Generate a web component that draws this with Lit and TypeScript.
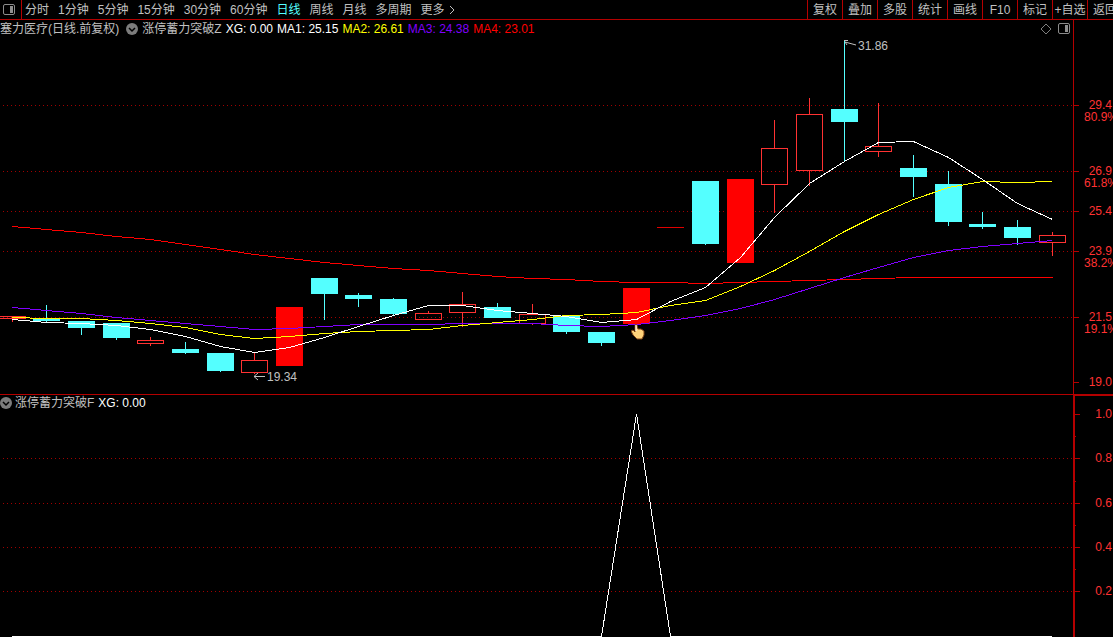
import { LitElement, html, svg, css } from "lit";
import { customElement } from "lit/decorators.js";
import { classMap } from "lit/directives/class-map.js";

type Kind = "down" | "up" | "limit" | "flat";
// kind, body top, body bottom, high, low
type Candle = [Kind, number, number, number, number];

const CENTERS = [
  12, 46, 81, 116, 150, 185, 220, 254, 289, 324, 358, 393, 428, 462, 497, 532,
  566, 601, 636, 670, 705, 740, 774, 809, 844, 878, 913, 948, 982, 1017, 1052,
];

const CANDLES: Candle[] = [
  ["up", 316, 319, 316, 322],
  ["down", 319, 321, 305, 322],
  ["down", 321, 328, 321, 335],
  ["down", 323, 338, 323, 340],
  ["up", 340, 344, 337, 346],
  ["down", 349, 353, 342, 354],
  ["down", 353, 371, 353, 372],
  ["up", 360, 373, 353, 374],
  ["limit", 307, 366, 307, 366],
  ["down", 278, 294, 278, 320],
  ["down", 295, 299, 293, 307],
  ["down", 299, 314, 298, 315],
  ["up", 313, 320, 311, 320],
  ["up", 304, 313, 292, 327],
  ["down", 307, 318, 303, 318],
  ["up", 314, 324, 304, 325],
  ["down", 316, 332, 316, 334],
  ["down", 332, 343, 332, 346],
  ["limit", 288, 324, 288, 324],
  ["flat", 227, 228, 227, 228],
  ["down", 181, 244, 181, 245],
  ["limit", 179, 263, 179, 263],
  ["up", 148, 185, 120, 213],
  ["up", 114, 171, 98, 186],
  ["down", 109, 122, 40, 162],
  ["up", 146, 152, 103, 157],
  ["down", 168, 177, 155, 197],
  ["down", 184, 222, 171, 226],
  ["down", 224, 227, 212, 229],
  ["down", 227, 238, 220, 245],
  ["up", 235, 243, 232, 256],
];

const AVERAGES: { name: string; values: number[] }[] = [
  {
    name: "ma4",
    values: [
      226, 229, 232, 236, 239, 244, 249, 254, 258, 262, 265, 268, 270, 273, 276,
      278, 279, 281, 282, 282, 283, 282, 281, 280, 279, 278, 277, 277, 277, 277, 277,
    ],
  },
  {
    name: "ma3",
    values: [
      307, 310, 313, 317, 320, 323, 326, 329, 328, 326, 324, 324, 324, 323, 323,
      323, 325, 326, 324, 320, 315, 308, 299, 288, 277, 267, 257, 250, 246, 243, 240,
    ],
  },
  {
    name: "ma2",
    values: [
      317, 318, 318, 320, 323, 327, 334, 338, 336, 333, 331, 330, 329, 325, 322,
      319, 315, 314, 312, 305, 300, 286, 270, 251, 231, 214, 199, 187, 181, 182, 181,
    ],
  },
  {
    name: "ma1",
    values: [
      319, 322, 323, 325, 329, 336, 346, 352, 347, 337, 326, 315, 305, 305, 310,
      313, 316, 322, 319, 301, 287, 257, 217, 183, 161, 142, 141, 157, 179, 203, 219,
    ],
  },
];

const PERIODS = [
  "分时", "1分钟", "5分钟", "15分钟", "30分钟", "60分钟",
  "日线", "周线", "月线", "多周期",
];
const TOOLS = ["复权", "叠加", "多股", "统计", "画线", "F10", "标记", "+自选", "返回"];

const PRICE_TOP = 38;
const PRICE_HEIGHT = 356;
const SIGNAL_TOP = 411;
const SIGNAL_HEIGHT = 226;
const WIDTH = 1073;

const PRICE_GRID = [105, 171, 211, 251, 317];
const SIGNAL_GRID = [458, 503, 547, 591];

const PRICE_TICKS = [
  { y: 105, label: "29.4", ratio: "80.9%" },
  { y: 171, label: "26.9", ratio: "61.8%" },
  { y: 211, label: "25.4", ratio: "" },
  { y: 251, label: "23.9", ratio: "38.2%" },
  { y: 317, label: "21.5", ratio: "19.1%" },
  { y: 382, label: "19.0", ratio: "" },
];
const SIGNAL_TICKS = [
  { y: 414, label: "1.0" },
  { y: 436, label: "" },
  { y: 458, label: "0.8" },
  { y: 481, label: "" },
  { y: 503, label: "0.6" },
  { y: 525, label: "" },
  { y: 547, label: "0.4" },
  { y: 569, label: "" },
  { y: 591, label: "0.2" },
];

const share = (value: number, total: number) => `${(value / total) * 100}%`;

const panelIcon = html`<svg class="icon" width="13" height="12" viewBox="0 0 13 12" aria-hidden="true">
  <rect x="0.5" y="0.5" width="11" height="10" rx="1.5" fill="none" stroke="#8c8c8c" />
  <rect x="7" y="2" width="3" height="7" fill="#909090" />
</svg>`;

const chevronIcon = html`<svg class="icon" width="12" height="12" viewBox="0 0 12 12" aria-hidden="true">
  <circle cx="6" cy="6" r="6" fill="#7c7c7c" />
  <path d="M3 5 L6 8 L9 5" fill="none" stroke="#000" stroke-width="1.5" />
</svg>`;

@customElement("app-root")
export class AppRoot extends LitElement {
  static styles = css`
    :host {
      display: grid;
      grid-template-rows: 20px minmax(0, 375fr) minmax(0, 242fr);
      height: 100vh;
      overflow: hidden;
      background: #000;
      color: #c0c0c0;
      font: 12px/16px "Liberation Sans", "Noto Sans CJK SC", sans-serif;
    }
    * {
      box-sizing: border-box;
    }
    button {
      margin: 0;
      padding: 0;
      border: 0;
      background: none;
      color: inherit;
      font: inherit;
      white-space: nowrap;
      cursor: pointer;
    }
    .icon {
      display: block;
      flex: none;
    }
    .toolbar {
      display: flex;
      min-width: 0;
      overflow: hidden;
      border-bottom: 1px solid #b40000;
    }
    .toggle {
      flex: none;
      width: 22px;
      padding-left: 3px;
      border-right: 1px solid #b40000;
    }
    .periods {
      display: flex;
      flex: 1;
      min-width: 0;
      gap: 9px;
      padding-left: 3px;
      overflow: hidden;
    }
    .periods .active {
      color: #54ffff;
    }
    .more {
      display: flex;
      align-items: center;
      gap: 4px;
    }
    .tools {
      display: flex;
      flex: 0 0 306px;
      overflow: hidden;
    }
    .tool {
      flex: none;
      width: 35px;
      border-left: 1px solid #b40000;
    }
    .panel {
      display: grid;
      grid-template-columns: minmax(0, 1fr) 40px;
      min-height: 0;
    }
    .price {
      border-bottom: 1px solid #b40000;
    }
    .main {
      display: flex;
      flex-direction: column;
      min-width: 0;
      min-height: 0;
    }
    .legend {
      display: flex;
      flex: none;
      align-items: center;
      gap: 4px;
      height: 18px;
      white-space: nowrap;
    }
    .signal .legend {
      height: 16px;
    }
    .fold {
      display: flex;
      align-items: center;
      gap: 3px;
    }
    .price .fold {
      gap: 4px;
      margin-left: 3px;
    }
    .actions {
      display: flex;
      align-items: center;
      gap: 6px;
      margin-left: auto;
      padding-right: 2px;
    }
    .value {
      color: #fff;
    }
    .ma2 {
      color: #ff0;
    }
    .ma3 {
      color: #8000ff;
    }
    .ma4 {
      color: #f00;
    }
    .canvas {
      position: relative;
      flex: 1;
      min-height: 0;
    }
    .plot {
      display: block;
      width: 100%;
      height: 100%;
      shape-rendering: crispEdges;
    }
    .grid {
      stroke: #a00000;
      stroke-dasharray: 1 3;
    }
    .line {
      fill: none;
      stroke: #fff;
    }
    .line.ma2 {
      stroke: #ff0;
    }
    .line.ma3 {
      stroke: #8000ff;
    }
    .line.ma4 {
      stroke: #f00;
    }
    .down {
      fill: #54ffff;
    }
    .limit {
      fill: #f00;
    }
    .flat {
      fill: #e00000;
    }
    .wick {
      fill: #ff3232;
    }
    .hollow {
      fill: none;
      stroke: #ff3232;
    }
    .note {
      position: absolute;
      display: flex;
      align-items: center;
      gap: 2px;
      transform: translateY(-50%);
    }
    .pointer {
      position: absolute;
    }
    .axis {
      position: relative;
      overflow: hidden;
      border-left: 1px solid #b40000;
      color: #ff3232;
    }
    .signal .axis {
      border-top: 1px solid #b40000;
      border-left-width: 2px;
    }
    .tick {
      position: absolute;
      left: 0;
      width: 5px;
      height: 1px;
      background: #b40000;
    }
    .minor {
      width: 1px;
    }
    .label {
      position: absolute;
      right: 1px;
      transform: translateY(-50%);
    }
    .ratio {
      position: absolute;
      left: 10px;
      padding-top: 4px;
    }
  `;

  private drawCandle([kind, top, bottom, high, low]: Candle, index: number) {
    const x = CENTERS[index];
    if (kind === "up") {
      return svg`
        <rect class="wick" x=${x} y=${high} width="1" height=${top - high}></rect>
        <rect class="wick" x=${x} y=${bottom} width="1" height=${low - bottom}></rect>
        <rect class="hollow" x=${x - 12.5} y=${top + 0.5} width="26" height=${bottom - top - 1}></rect>`;
    }
    return svg`
      <rect class=${kind} x=${x - 13} y=${top} width="27" height=${bottom - top}></rect>
      <rect class=${kind} x=${x} y=${high} width="1" height=${low - high}></rect>`;
  }

  private drawGrid(rows: number[]) {
    return rows.map(
      (y) => svg`<line class="grid" x1="3" x2=${WIDTH} y1=${y + 0.5} y2=${y + 0.5}></line>`,
    );
  }

  private renderToolbar() {
    return html`<header class="toolbar">
      <button class="toggle" aria-label="侧栏">${panelIcon}</button>
      <nav class="periods">
        ${PERIODS.map(
          (name) => html`<button class=${classMap({ active: name === "日线" })}>${name}</button>`,
        )}
        <button class="more">
          更多
          <svg class="icon" width="7" height="10" viewBox="0 0 7 10" aria-hidden="true">
            <path d="M1 1 L5 5 L1 9" fill="none" stroke="#c0c0c0" />
          </svg>
        </button>
      </nav>
      <nav class="tools">${TOOLS.map((name) => html`<button class="tool">${name}</button>`)}</nav>
    </header>`;
  }

  private renderPrice() {
    const at = (x: number, y: number) =>
      `left:${share(x, WIDTH)};top:${share(y - PRICE_TOP, PRICE_HEIGHT)}`;
    const axisTotal = PRICE_HEIGHT + 18;
    return html`<section class="panel price">
      <div class="main">
        <div class="legend">
          <span>塞力医疗(日线.前复权)</span>
          <button class="fold">${chevronIcon}涨停蓄力突破Z</button>
          <span class="value">XG: 0.00</span>
          <span class="value">MA1: 25.15</span>
          <span class="ma2">MA2: 26.61</span>
          <span class="ma3">MA3: 24.38</span>
          <span class="ma4">MA4: 23.01</span>
          <div class="actions">
            <button aria-label="标注">
              <svg class="icon" width="12" height="12" viewBox="0 0 12 12" aria-hidden="true">
                <path d="M6 1 L11 6 L6 11 L1 6 Z" fill="none" stroke="#808080" />
              </svg>
            </button>
            <button aria-label="面板">${panelIcon}</button>
          </div>
        </div>
        <div class="canvas">
          <svg class="plot" viewBox="0 ${PRICE_TOP} ${WIDTH} ${PRICE_HEIGHT}" preserveAspectRatio="none">
            ${this.drawGrid(PRICE_GRID)}
            ${CANDLES.map((candle, index) => this.drawCandle(candle, index))}
            ${AVERAGES.map(
              ({ name, values }) => svg`<polyline class="line ${name}"
                points=${values.map((y, i) => `${CENTERS[i] + 0.5},${y + 0.5}`).join(" ")}></polyline>`,
            )}
          </svg>
          <span class="note" style=${at(844, 46)}>
            <svg class="icon" width="12" height="12" viewBox="0 0 12 12" aria-hidden="true">
              <path d="M1 2 L12 5 M0 0.5 H4 M1 2 L3 5" fill="none" stroke="#c0c0c0" />
            </svg>31.86
          </span>
          <span class="note" style=${at(253, 377)}>
            <svg class="icon" width="12" height="12" viewBox="0 0 12 12" aria-hidden="true">
              <path d="M1 5.5 H12 M5 2 L1 5.5 L5 9" fill="none" stroke="#c0c0c0" />
            </svg>19.34
          </span>
          <svg class="pointer" style=${at(631, 324)} width="14" height="16" viewBox="0 0 14 16" aria-hidden="true">
            <path d="M4 1 Q5 0 6 1 L7 5 L10 5 L13 7 L13 11 L11 15 L6 15 L2 11 L0 7 L2 6 L4 8 Z" fill="#ffd27a" stroke="#7a3e14" />
            <path d="M5 1 L5 7" stroke="#fff" />
          </svg>
        </div>
      </div>
      <div class="axis">
        ${PRICE_TICKS.map(({ y, label, ratio }) => {
          const top = `top:${share(y - 20, axisTotal)}`;
          return html`<i class="tick" style=${top}></i>
            <span class="label" style=${top}>${label}</span>
            ${ratio ? html`<span class="ratio" style=${top}>${ratio}</span>` : ""}`;
        })}
      </div>
    </section>`;
  }

  private renderSignal() {
    return html`<section class="panel signal">
      <div class="main">
        <div class="legend">
          <button class="fold">${chevronIcon}涨停蓄力突破F</button>
          <span class="value">XG: 0.00</span>
        </div>
        <div class="canvas">
          <svg class="plot" viewBox="0 ${SIGNAL_TOP} ${WIDTH} ${SIGNAL_HEIGHT}" preserveAspectRatio="none">
            ${this.drawGrid(SIGNAL_GRID)}
            <polyline class="line" points="12,636.5 601.5,636.5 636.5,414 670.5,636.5 1052,636.5"></polyline>
          </svg>
        </div>
      </div>
      <div class="axis">
        ${SIGNAL_TICKS.map(({ y, label }) => {
          const top = `top:${share(y - 396, 241)}`;
          return html`<i class=${classMap({ tick: true, minor: !label })} style=${top}></i>
            ${label ? html`<span class="label" style=${top}>${label}</span>` : ""}`;
        })}
      </div>
    </section>`;
  }

  render() {
    return html`${this.renderToolbar()}${this.renderPrice()}${this.renderSignal()}`;
  }
}
